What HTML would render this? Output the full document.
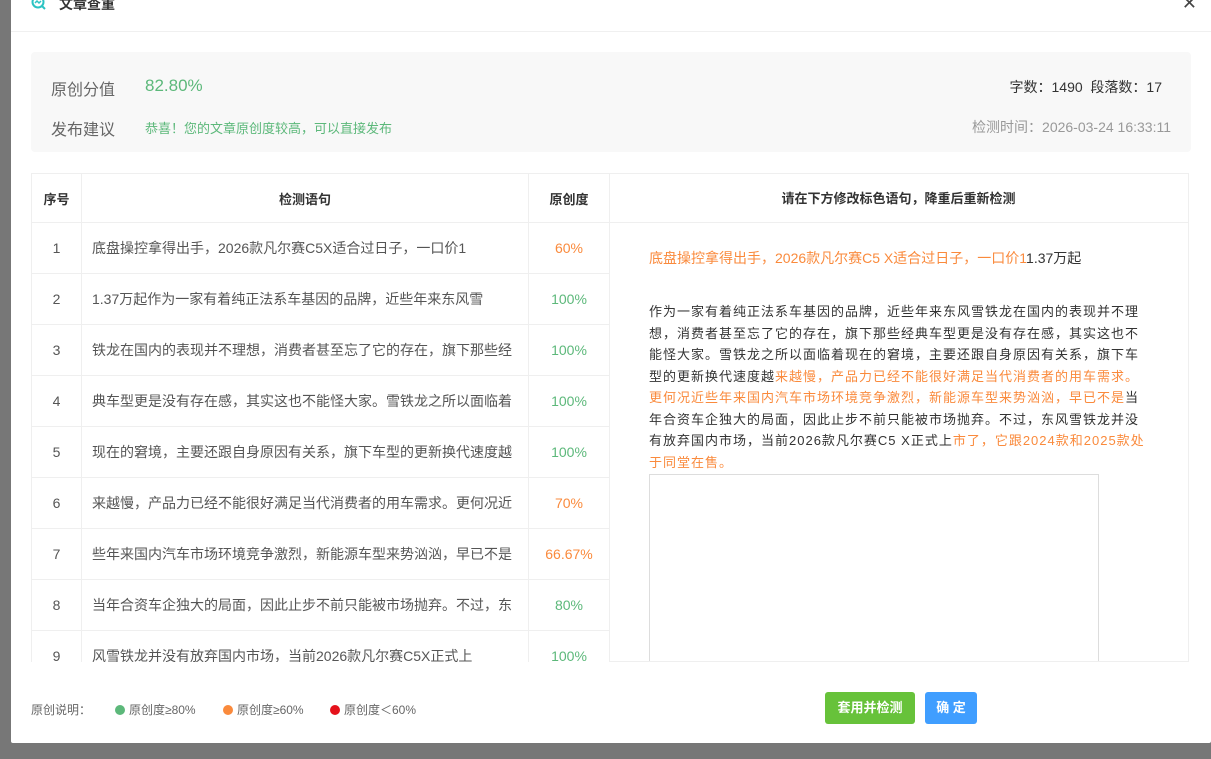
<!DOCTYPE html>
<html><head><meta charset="utf-8"><style>
*{margin:0;padding:0;box-sizing:border-box}
body{width:1211px;height:759px;overflow:hidden;background:#777;font-family:"Liberation Sans","Noto Sans CJK SC",sans-serif;position:relative}
.modal{position:absolute;left:11px;top:-10px;width:1200px;height:753px;background:#fff;border-radius:2px}
.title{position:absolute;left:0;top:10px;height:32px;width:100%;border-bottom:1px solid #f0f0f0}
.title span{position:absolute;left:48px;top:-4px;line-height:16px;font-size:14px;color:#333;font-weight:bold}
.close{position:absolute;right:14px;top:-6px;font-size:18px;line-height:18px;color:#444}
.sum{position:absolute;left:20px;top:62px;width:1160px;height:100px;background:#f8f8f8;border-radius:4px}
.sum div{position:absolute;white-space:nowrap}
.tw{position:absolute;left:20px;top:183px;height:489px;overflow:hidden}
table{border-collapse:collapse}
td,th{border:1px solid #efefef;height:51px;font-size:14px;color:#555;text-align:center;font-weight:normal}
th{height:49px;font-weight:bold;font-size:13px;color:#333}
td.t{text-align:left;padding-left:10px;white-space:nowrap;overflow:hidden}
.g{color:#5cb87a}.o{color:#fa8a3c}
.right{position:absolute;left:598px;top:183px;width:580px;height:489px;border:1px solid #efefef;border-left:none;overflow:hidden}
.rh{height:49px;border-bottom:1px solid #efefef;text-align:center;line-height:49px;font-size:13px;font-weight:bold;color:#333}
.rt{position:absolute;left:40px;width:540px;font-size:13px;letter-spacing:1px;color:#333;line-height:21.5px;white-space:nowrap}
.box{position:absolute;left:40px;top:300px;width:450px;height:200px;border:1px solid #ddd;border-bottom:none}
.foot{position:absolute;top:711px;font-size:12px;color:#666}
.dot{display:inline-block;width:10px;height:10px;border-radius:50%;margin-right:4px;vertical-align:-1px}
.btn{position:absolute;top:702px;height:32px;line-height:32px;color:#fff;font-size:13px;font-weight:bold;text-align:center;border-radius:3px}
</style></head><body>
<div class="modal">
<div class="title">
<svg style="position:absolute;left:20px;top:-5px" width="16" height="16" viewBox="0 0 16 16"><circle cx="7" cy="7" r="5.5" fill="none" stroke="#2cc3c3" stroke-width="2"/><path d="M4 8 L6 6 L8 8 L10 6" stroke="#2cc3c3" stroke-width="1.5" fill="none"/><path d="M11 11 L14 14" stroke="#2cc3c3" stroke-width="2"/></svg>
<span>文章查重</span><div class="close">✕</div></div>
<div class="sum">
<div style="left:20px;top:24px;font-size:16px;color:#666">原创分值</div>
<div style="left:114px;top:24px;font-size:17px;color:#5cb87a">82.80%</div>
<div style="left:20px;top:64px;font-size:16px;color:#666">发布建议</div>
<div style="left:114px;top:66px;font-size:13px;color:#5cb87a">恭喜！您的文章原创度较高，可以直接发布</div>
<div style="right:29px;top:25px;font-size:14px;color:#333">字数：1490&nbsp;&nbsp;段落数：17</div>
<div style="right:20px;top:65px;font-size:14px;color:#999">检测时间：2026-03-24 16:33:11</div>
</div>
<div class="tw"><table>
<tr><th style="width:50px">序号</th><th style="width:447px">检测语句</th><th style="width:81px">原创度</th></tr>
<tr><td>1</td><td class="t">底盘操控拿得出手，2026款凡尔赛C5X适合过日子，一口价1</td><td class="o">60%</td></tr>
<tr><td>2</td><td class="t">1.37万起作为一家有着纯正法系车基因的品牌，近些年来东风雪</td><td class="g">100%</td></tr>
<tr><td>3</td><td class="t">铁龙在国内的表现并不理想，消费者甚至忘了它的存在，旗下那些经</td><td class="g">100%</td></tr>
<tr><td>4</td><td class="t">典车型更是没有存在感，其实这也不能怪大家。雪铁龙之所以面临着</td><td class="g">100%</td></tr>
<tr><td>5</td><td class="t">现在的窘境，主要还跟自身原因有关系，旗下车型的更新换代速度越</td><td class="g">100%</td></tr>
<tr><td>6</td><td class="t">来越慢，产品力已经不能很好满足当代消费者的用车需求。更何况近</td><td class="o">70%</td></tr>
<tr><td>7</td><td class="t">些年来国内汽车市场环境竞争激烈，新能源车型来势汹汹，早已不是</td><td class="o">66.67%</td></tr>
<tr><td>8</td><td class="t">当年合资车企独大的局面，因此止步不前只能被市场抛弃。不过，东</td><td class="g">80%</td></tr>
<tr><td>9</td><td class="t">风雪铁龙并没有放弃国内市场，当前2026款凡尔赛C5X正式上</td><td class="g">100%</td></tr>
</table></div>
<div class="right">
<div class="rh">请在下方修改标色语句，降重后重新检测</div>
<div class="rt" style="top:74px;font-size:14px;letter-spacing:0"><span class="o">底盘操控拿得出手，2026款凡尔赛C5 X适合过日子，一口价1</span>1.37万起</div>
<div class="rt" style="top:127px">作为一家有着纯正法系车基因的品牌，近些年来东风雪铁龙在国内的表现并不理<br>想，消费者甚至忘了它的存在，旗下那些经典车型更是没有存在感，其实这也不<br>能怪大家。雪铁龙之所以面临着现在的窘境，主要还跟自身原因有关系，旗下车<br>型的更新换代速度越<span class="o">来越慢，产品力已经不能很好满足当代消费者的用车需求。<br>更何况近些年来国内汽车市场环境竞争激烈，新能源车型来势汹汹，早已不是</span>当<br>年合资车企独大的局面，因此止步不前只能被市场抛弃。不过，东风雪铁龙并没<br>有放弃国内市场，当前2026款凡尔赛C5 X正式上<span class="o">市了，它跟2024款和2025款处<br>于同堂在售。</span></div>
<div class="box"></div>
</div>
<div class="foot" style="left:20px">原创说明：</div>
<div class="foot" style="left:104px"><span class="dot" style="background:#5cb87a"></span>原创度≥80%</div>
<div class="foot" style="left:212px"><span class="dot" style="background:#fa8a3c"></span>原创度≥60%</div>
<div class="foot" style="left:319px"><span class="dot" style="background:#e5121b"></span>原创度＜60%</div>
<div class="btn" style="left:814px;width:90px;background:#67c23a">套用并检测</div>
<div class="btn" style="left:914px;width:52px;background:#409eff">确 定</div>
</div>
</body></html>
